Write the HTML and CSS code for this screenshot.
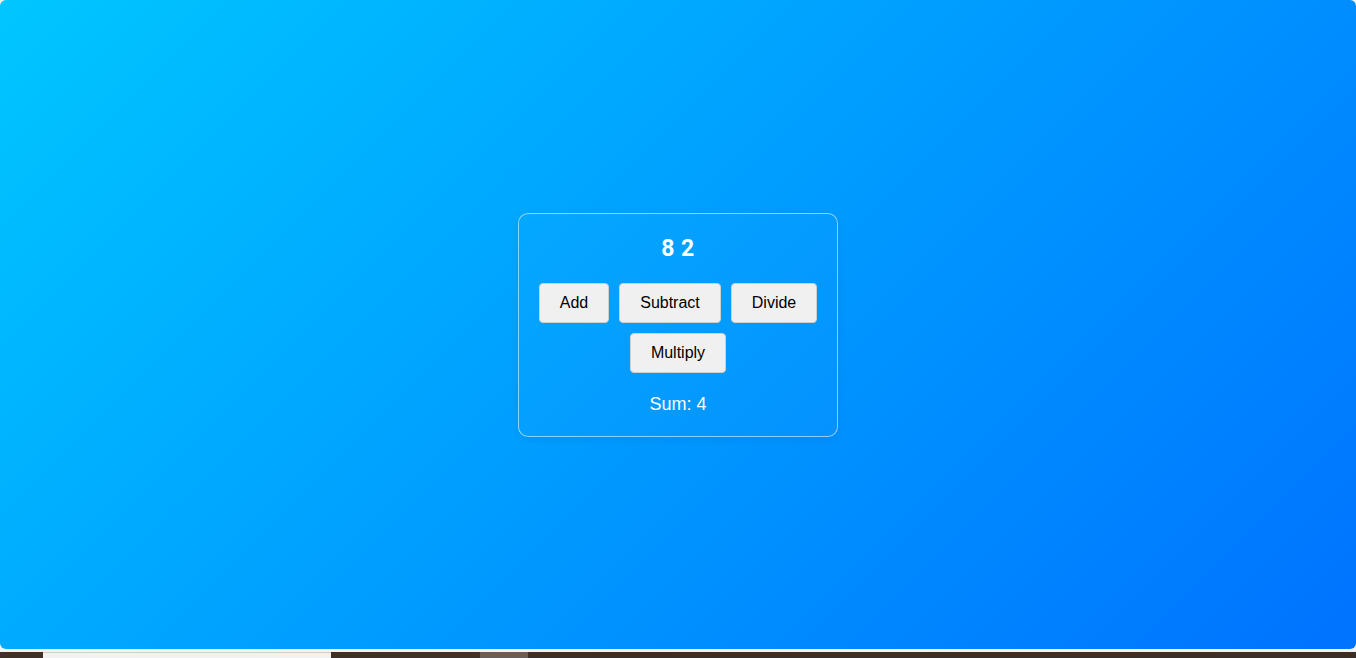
FILE: index.html
```html
<!DOCTYPE html>
<html>
<head>
<meta charset="utf-8">
<link rel="stylesheet" href="styles.css">
</head>
<body>
<div class="page">
  <div class="card">
    <h2 class="numbers">8 2</h2>
    <div class="buttons">
      <button class="btn">Add</button>
      <button class="btn">Subtract</button>
      <button class="btn">Divide</button>
      <button class="btn">Multiply</button>
    </div>
    <p class="result">Sum: 4</p>
  </div>
</div>
<div class="strip"></div>
<div class="taskbar">
  <div class="seg seg-dark1"></div>
  <div class="seg seg-light"></div>
  <div class="seg seg-dark2"></div>
  <div class="seg seg-gray"></div>
  <div class="seg seg-dark3"></div>
</div>
</body>
</html>
```

FILE: styles.css
```css
html, body {
  margin: 0;
  padding: 0;
  background: #f3f3f3;
  font-family: "Liberation Sans", Arial, sans-serif;
}
.page {
  height: 649px;
  border-radius: 6px;
  background: linear-gradient(135deg, #00c6ff, #0072ff);
  display: flex;
  align-items: center;
  justify-content: center;
}
.card {
  width: 282px;
  padding: 21px 18px;
  border: 1px solid rgba(255,255,255,0.55);
  border-radius: 10px;
  background: rgba(255,255,255,0.015);
  box-shadow: 0 2px 8px rgba(0,0,0,0.08);
  text-align: center;
  color: #fff;
}
.numbers {
  margin: 0 0 20px;
  font-family: Roboto, "Liberation Sans", Arial, sans-serif;
  font-size: 23px;
  line-height: 28px;
  font-weight: bold;
  letter-spacing: 0.5px;
}
.buttons {
  display: flex;
  flex-wrap: wrap;
  justify-content: center;
  gap: 10px;
}
.btn {
  font-family: "Liberation Sans", Arial, sans-serif;
  font-size: 16px;
  line-height: 18px;
  padding: 10px 20px;
  background: #f0f0f0;
  color: #000;
  border: 1px solid #cfcfcf;
  border-radius: 4px;
}
.result {
  margin: 21px 0 0;
  font-size: 18px;
  line-height: 21px;
}
.strip {
  height: 3px;
  background: #f3f3f3;
}
.taskbar {
  height: 6px;
  display: flex;
}
.seg { height: 100%; }
.seg-dark1 { width: 43px; background: #3d3129; }
.seg-light { width: 288px; background: #f2f2f2; border-top: 1px solid #cfcfcf; box-sizing: border-box; }
.seg-dark2 { width: 149px; background: #3d3129; }
.seg-gray { width: 48px; background: #6a5f58; }
.seg-dark3 { flex: 1; background: #3b3029; }
```
